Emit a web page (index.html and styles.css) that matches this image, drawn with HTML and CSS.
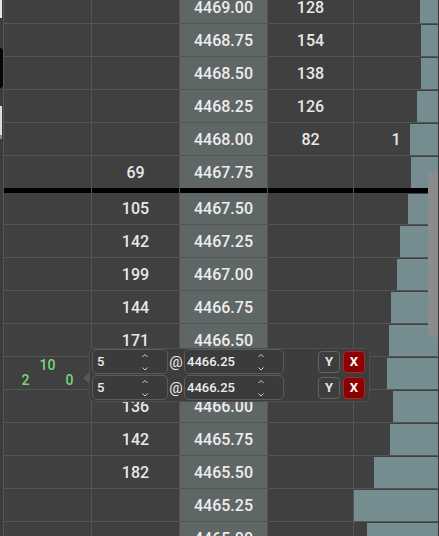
FILE: index.html
```html
<!DOCTYPE html>
<html lang="en">
<head>
    <meta charset="UTF-8">
    <meta name="viewport" content="width=device-width, initial-scale=1.0">
    <title>Price Ladder</title>
    <link rel="stylesheet" href="styles.css">
</head>
<body>
    <div class="page">
        <div class="edge">
            <div class="edge-top"></div>
            <div class="edge-handle"></div>
            <div class="edge-bottom"></div>
        </div>

        <div class="ladder">
            <div class="row">
                <div class="cell"></div><div class="cell"></div>
                <div class="cell price">4469.00</div>
                <div class="cell">128</div>
                <div class="cell depth"><div class="bar" style="width:18px"></div></div>
            </div>
            <div class="row">
                <div class="cell"></div><div class="cell"></div>
                <div class="cell price">4468.75</div>
                <div class="cell">154</div>
                <div class="cell depth"><div class="bar" style="width:17px"></div></div>
            </div>
            <div class="row">
                <div class="cell"></div><div class="cell"></div>
                <div class="cell price">4468.50</div>
                <div class="cell">138</div>
                <div class="cell depth"><div class="bar" style="width:17px"></div></div>
            </div>
            <div class="row">
                <div class="cell"></div><div class="cell"></div>
                <div class="cell price">4468.25</div>
                <div class="cell">126</div>
                <div class="cell depth"><div class="bar" style="width:21px"></div></div>
            </div>
            <div class="row">
                <div class="cell"></div><div class="cell"></div>
                <div class="cell price">4468.00</div>
                <div class="cell">82</div>
                <div class="cell depth"><div class="bar" style="width:28px"></div><span class="depth-qty">1</span></div>
            </div>
            <div class="row last-ask">
                <div class="cell"></div><div class="cell">69</div>
                <div class="cell price">4467.75</div>
                <div class="cell"></div>
                <div class="cell depth"><div class="bar" style="width:27px"></div></div>
            </div>

            <div class="row spread">
                <div class="cell"></div><div class="cell"></div><div class="cell"></div><div class="cell"></div><div class="cell"></div>
            </div>

            <div class="row first-bid">
                <div class="cell"></div><div class="cell">105</div>
                <div class="cell price">4467.50</div>
                <div class="cell"></div>
                <div class="cell depth"><div class="bar" style="width:30px"></div></div>
            </div>
            <div class="row">
                <div class="cell"></div><div class="cell">142</div>
                <div class="cell price">4467.25</div>
                <div class="cell"></div>
                <div class="cell depth"><div class="bar" style="width:38px"></div></div>
            </div>
            <div class="row">
                <div class="cell"></div><div class="cell">199</div>
                <div class="cell price">4467.00</div>
                <div class="cell"></div>
                <div class="cell depth"><div class="bar" style="width:41px"></div></div>
            </div>
            <div class="row">
                <div class="cell"></div><div class="cell">144</div>
                <div class="cell price">4466.75</div>
                <div class="cell"></div>
                <div class="cell depth"><div class="bar" style="width:47px"></div></div>
            </div>
            <div class="row">
                <div class="cell"></div><div class="cell">171</div>
                <div class="cell price">4466.50</div>
                <div class="cell"></div>
                <div class="cell depth"><div class="bar" style="width:49px"></div></div>
            </div>
            <div class="row">
                <div class="cell orders">
                    <span class="o-mid">10</span>
                    <span class="o-left">2</span>
                    <span class="o-right">0</span>
                </div>
                <div class="cell"></div>
                <div class="cell price">4466.25</div>
                <div class="cell"></div>
                <div class="cell depth"><div class="bar" style="width:51px"></div></div>
            </div>
            <div class="row">
                <div class="cell"></div><div class="cell">136</div>
                <div class="cell price">4466.00</div>
                <div class="cell"></div>
                <div class="cell depth"><div class="bar" style="width:45px"></div></div>
            </div>
            <div class="row">
                <div class="cell"></div><div class="cell">142</div>
                <div class="cell price">4465.75</div>
                <div class="cell"></div>
                <div class="cell depth"><div class="bar" style="width:48px"></div></div>
            </div>
            <div class="row">
                <div class="cell"></div><div class="cell">182</div>
                <div class="cell price">4465.50</div>
                <div class="cell"></div>
                <div class="cell depth"><div class="bar" style="width:64px"></div></div>
            </div>
            <div class="row">
                <div class="cell"></div><div class="cell"></div>
                <div class="cell price">4465.25</div>
                <div class="cell"></div>
                <div class="cell depth"><div class="bar" style="width:84px"></div></div>
            </div>
            <div class="row">
                <div class="cell"></div><div class="cell"></div>
                <div class="cell price">4465.00</div>
                <div class="cell"></div>
                <div class="cell depth"><div class="bar" style="width:71px"></div></div>
            </div>
        </div>

        <div class="order-popup">
            <div class="order-line">
                <div class="field qty">
                    <span>5</span>
                    <svg class="spin" width="8" height="25" viewBox="0 0 8 25"><polyline points="1.5,8 4,5.5 6.5,8" /><polyline points="1.5,18.5 4,21 6.5,18.5" /></svg>
                </div>
                <span class="at">@</span>
                <div class="field px">
                    <span>4466.25</span>
                    <svg class="spin" width="8" height="25" viewBox="0 0 8 25"><polyline points="1.5,8 4,5.5 6.5,8" /><polyline points="1.5,18.5 4,21 6.5,18.5" /></svg>
                </div>
                <button class="btn-y">Y</button>
                <button class="btn-x">X</button>
            </div>
            <div class="order-line">
                <div class="field qty">
                    <span>5</span>
                    <svg class="spin" width="8" height="25" viewBox="0 0 8 25"><polyline points="1.5,8 4,5.5 6.5,8" /><polyline points="1.5,18.5 4,21 6.5,18.5" /></svg>
                </div>
                <span class="at">@</span>
                <div class="field px">
                    <span>4466.25</span>
                    <svg class="spin" width="8" height="25" viewBox="0 0 8 25"><polyline points="1.5,8 4,5.5 6.5,8" /><polyline points="1.5,18.5 4,21 6.5,18.5" /></svg>
                </div>
                <button class="btn-y">Y</button>
                <button class="btn-x">X</button>
            </div>
        </div>

        <div class="scroll-thumb"></div>
    </div>
</body>
</html>
```

FILE: styles.css
```css
* {
    margin: 0;
    padding: 0;
    box-sizing: border-box;
    font-family: 'Roboto', 'Liberation Sans', sans-serif;
}
body {
    background: #404040;
    color: #e8e8e8;
    overflow: hidden;
}
.page {
    position: relative;
    display: flex;
    width: 439px;
    height: 536px;
    overflow: hidden;
}
.edge {
    width: 3px;
    flex: none;
    background: #3c3c3c;
    display: flex;
    flex-direction: column;
}
.edge-top {
    width: 2px;
    height: 18px;
    background: #e6e6e6;
}
.edge-handle {
    width: 3px;
    height: 40px;
    margin-top: 30px;
    background: #050505;
    border-radius: 0 3px 3px 0;
}
.edge-bottom {
    width: 2px;
    height: 33px;
    margin-top: 18px;
    background: #dcdcdc;
    border-bottom: 4px solid #8a8a8a;
}
.ladder {
    margin-top: -9px;
    border-left: 1px solid #555;
    border-right: 1px solid #3a3a3a;
    background: #555;
}
.row {
    display: grid;
    grid-template-columns: 87px 87px 87px 85px 84px;
    column-gap: 1px;
    height: 33px;
    border-bottom: 1px solid #555;
}
.row.last-ask {
    height: 32px;
    border-bottom: 0;
}
.row.spread {
    height: 5px;
    border-bottom: 0;
}
.row.spread .cell {
    background: #000;
}
.row.first-bid {
    height: 32px;
}
.cell {
    background: #404040;
    display: flex;
    align-items: center;
    justify-content: center;
    font-size: 16px;
    font-weight: 500;
}
.cell.price {
    background: #5f6666;
    color: #ededed;
}
.cell.depth {
    display: grid;
    align-items: stretch;
    justify-content: stretch;
}
.depth .bar,
.depth .depth-qty {
    grid-area: 1 / 1;
}
.depth .bar {
    justify-self: end;
    margin-top: 1px;
    background: #758c91;
}
.depth .depth-qty {
    align-self: center;
    justify-self: center;
}
.cell.orders {
    display: grid;
    grid-template-columns: repeat(3, 22px);
    grid-auto-rows: 15px;
    align-content: center;
    justify-content: center;
    font-size: 14px;
    font-weight: 500;
    line-height: 15px;
    color: #76d676;
    text-align: center;
}
.o-mid {
    grid-column: 2;
    grid-row: 1;
}
.o-left {
    grid-column: 1;
    grid-row: 2;
}
.o-right {
    grid-column: 3;
    grid-row: 2;
}
.order-popup {
    position: absolute;
    left: 89px;
    top: 348px;
    width: 281px;
    padding: 0 4px 1px 2px;
    background: #3d3d3d;
    border: 1px solid #4e4e4e;
    border-radius: 5px;
    display: flex;
    flex-direction: column;
    gap: 1px;
}
.order-popup::before {
    content: '';
    position: absolute;
    left: -7px;
    top: 24px;
    border-style: solid;
    border-width: 5px 6px 5px 0;
    border-color: transparent #595959 transparent transparent;
}
.order-line {
    display: flex;
    align-items: center;
    height: 25px;
}
.field {
    height: 25px;
    display: flex;
    align-items: center;
    justify-content: space-between;
    padding-left: 4px;
    border: 1px solid #5b5b5b;
    border-radius: 5px;
    background: #3b3b3b;
    font-size: 13px;
    font-weight: 500;
    color: #eeeeee;
}
.field.qty {
    width: 76px;
    padding-right: 18px;
}
.field.px {
    width: 100px;
    padding-left: 2px;
    padding-right: 18px;
}
.spin polyline {
    fill: none;
    stroke: #cfcfcf;
    stroke-width: 1;
}
.at {
    width: 16px;
    text-align: center;
    font-size: 15px;
    color: #eeeeee;
}
.btn-y,
.btn-x {
    width: 22px;
    height: 22px;
    border-radius: 4px;
    font-size: 13px;
    font-weight: 700;
    color: #e6e6e6;
    display: flex;
    align-items: center;
    justify-content: center;
}
.btn-y {
    margin-left: auto;
    background: #3d3d3d;
    border: 1px solid #636363;
}
.btn-x {
    margin-left: 3px;
    background: #8c0000;
    border: 1px solid #a52a2a;
    color: #fff;
}
.scroll-thumb {
    position: absolute;
    left: 428px;
    top: 172px;
    width: 10px;
    height: 165px;
    background: #8b8b8b;
}
```
